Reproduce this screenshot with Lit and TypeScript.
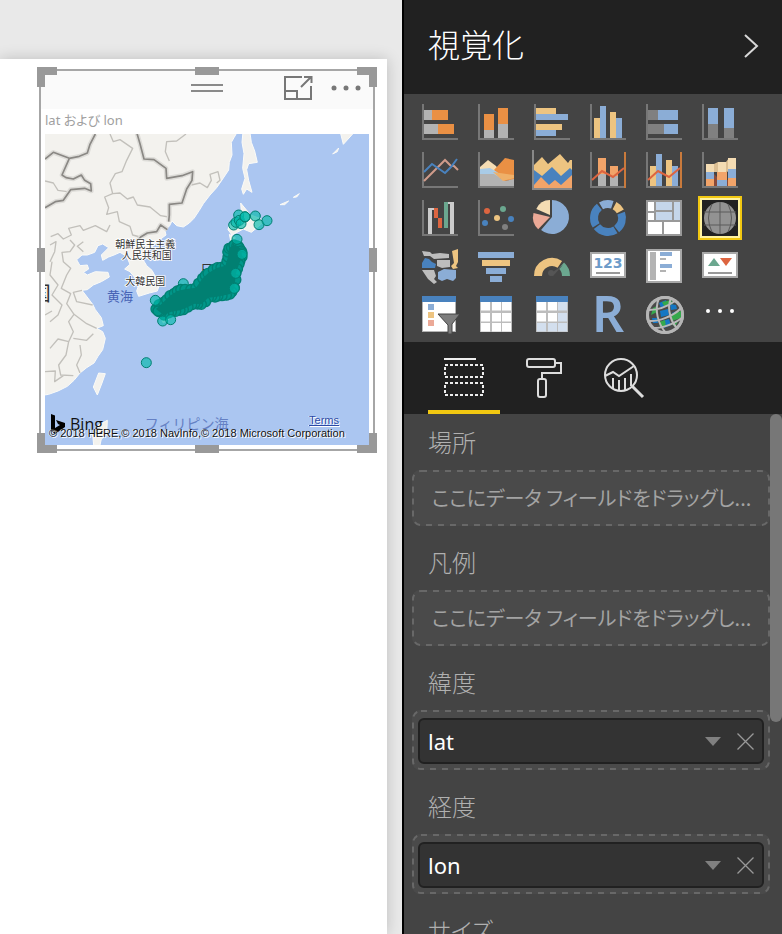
import { LitElement, html, svg, css } from "lit";
import { customElement } from "lit/decorators.js";
import { classMap } from "lit/directives/class-map.js";

const G = "#b3b3b3", D = "#808080", O = "#ea9044", B = "#8badd6", Y = "#edc481";
const DB = "#4982be", P = "#eba997", C = "#f4dcb3", R = "#dd6540", T = "#6ba78f";

const r = (x: number, y: number, w: number, h: number, fill: string) =>
  svg`<rect x=${x} y=${y} width=${w} height=${h} fill=${fill} />`;
const p = (d: string, fill: string) => svg`<path d=${d} fill=${fill} />`;
const line = (d: string, stroke: string, w = 2) =>
  svg`<path d=${d} fill="none" stroke=${stroke} stroke-width=${w} />`;
const dot = (x: number, y: number, rad: number, fill: string) =>
  svg`<circle cx=${x} cy=${y} r=${rad} fill=${fill} />`;
const axis = line("M3 2V37H38", "#777");

/* annular sector, angles in degrees clockwise from the top */
const ring = (cx: number, cy: number, ro: number, ri: number, a: number, b: number, fill: string) => {
  const pt = (rad: number, t: number) => {
    const q = (t * Math.PI) / 180;
    return `${(cx + rad * Math.sin(q)).toFixed(2)} ${(cy - rad * Math.cos(q)).toFixed(2)}`;
  };
  const big = b - a > 180 ? 1 : 0;
  return p(`M${pt(ro, a)}A${ro} ${ro} 0 ${big} 1 ${pt(ro, b)}L${pt(ri, b)}A${ri} ${ri} 0 ${big} 0 ${pt(ri, a)}Z`, fill);
};

const tableGrid = (shaded: boolean) => svg`
  ${r(4, 2, 32, 36, "#bdbdbd")}${r(4, 2, 32, 6, DB)}
  ${[0, 1, 2].map(i => [0, 1, 2].map(j =>
    r(5 + i * 10 + (i ? 1 : 0), 8 + j * 10 + (j ? 1 : 0), 9, 8.5, shaded && (i === 2 || j === 2) ? "#d3dfee" : "#fff")))}`;

const visuals: { name: string; art: unknown; on?: boolean }[] = [
  { name: "積み上げ横棒グラフ", art: svg`${axis}${r(4, 8, 8, 10, G)}${r(12, 8, 16, 10, O)}${r(4, 22, 14, 10, G)}${r(18, 22, 16, 10, O)}` },
  { name: "積み上げ縦棒グラフ", art: svg`${axis}${r(8, 12, 10, 16, O)}${r(8, 28, 10, 8, G)}${r(22, 6, 10, 16, O)}${r(22, 22, 10, 14, G)}` },
  { name: "集合横棒グラフ", art: svg`${axis}${r(4, 6, 20, 6, Y)}${r(4, 12, 32, 6, B)}${r(4, 22, 26, 6, Y)}${r(4, 28, 20, 6, B)}` },
  { name: "集合縦棒グラフ", art: svg`${axis}${r(6, 16, 6, 20, Y)}${r(12, 4, 6, 32, B)}${r(22, 10, 6, 26, Y)}${r(28, 16, 6, 20, B)}` },
  { name: "100% 積み上げ横棒グラフ", art: svg`${axis}${r(4, 8, 10, 10, D)}${r(14, 8, 20, 10, B)}${r(4, 22, 16, 10, D)}${r(20, 22, 14, 10, B)}` },
  { name: "100% 積み上げ縦棒グラフ", art: svg`${axis}${r(8, 6, 10, 16, B)}${r(8, 22, 10, 14, D)}${r(24, 6, 10, 20, B)}${r(24, 26, 10, 10, D)}` },
  { name: "折れ線グラフ", art: svg`${axis}${line("M4 31 25 10 31 16H34L38 20", "#cf9b8a")}${line("M4 22 12 14 25 23 31 17 37 9", DB)}` },
  { name: "面グラフ", art: svg`${axis}${p("M4 17 12 10 20 16 26 24 4 30Z", C)}${p("M18 20 29 8 38 10V30L28 31Z", O)}${p("M4 19 14 18 21 22 28 28H4Z", "#a9cbe6")}${p("M4 24 18 24 29 31 38 29V36H4Z", G)}${p("M17 22 38 25V28L27 31Z", "#efb069")}` },
  { name: "積み上げ面グラフ", art: svg`${p("M2 15 10 7 16 14 28 4 36 13 38 10H40V30H2Z", Y)}${p("M2 20 10 26 20 17 29 26 38 18 40 20V38H2Z", DB)}${p("M2 35 9 27 17 35 23 30 29 35 40 25V38H2Z", "#f2a469")}${p("M0 0H2V38H40V40H0Z", "#888")}` },
  { name: "折れ線および積み上げ縦棒グラフ", art: svg`${axis}${r(10, 8, 8, 16, "#f2a469")}${r(10, 24, 8, 12, G)}${r(22, 16, 8, 10, "#f2a469")}${r(22, 26, 8, 10, G)}${r(36, 2, 2, 36, "#c97a3c")}${line("M4 30 14 21 25 27 36 18", R)}` },
  { name: "折れ線および集合縦棒グラフ", art: svg`${axis}${r(6, 16, 6, 20, Y)}${r(12, 4, 6, 32, B)}${r(22, 10, 6, 26, Y)}${r(28, 16, 6, 20, B)}${r(36, 2, 2, 36, "#c97a3c")}${line("M4 30 14 21 25 27 36 18", R)}` },
  { name: "リボン グラフ", art: svg`${axis}${p("M6 14H14L18 12H26L29 8H36V20L26 22H6Z", "#dcbf93")}${p("M12 22 20 30H28L34 20V36H14Z", "#8a4a3a")}${r(6, 14, 8, 9, C)}${r(6, 22, 8, 7, B)}${r(6, 29, 8, 7, "#f2a469")}${r(18, 12, 8, 10, C)}${r(17, 22, 10, 8, "#f2a469")}${r(17, 30, 10, 6, B)}${r(28, 8, 8, 11, C)}${r(28, 19, 8, 9, B)}${r(28, 28, 8, 8, "#f2a469")}` },
  { name: "ウォーターフォール図", art: svg`${axis}${r(8, 10, 4, 26, "#ccc")}${r(12, 10, 2, 2, "#ccc")}${r(14, 10, 4, 10, R)}${r(18, 20, 4, 10, R)}${r(24, 4, 4, 26, T)}${r(28, 4, 6, 2, "#ccc")}${r(30, 4, 4, 32, "#ccc")}` },
  { name: "散布図", art: svg`${axis}${dot(11, 13, 3, R)}${dot(27, 11, 3, T)}${dot(21, 20, 3, Y)}${dot(9, 25, 3, DB)}${dot(35, 21, 3, DB)}${dot(29, 29, 3, D)}` },
  { name: "円グラフ", art: svg`${ring(20, 19, 17, 0, 0, 220, B)}${ring(18, 19, 17, 0, 224, 284, P)}${ring(18, 17, 15, 0, 294, 360, C)}` },
  { name: "ドーナツ グラフ", art: svg`${ring(20, 20, 18, 10, -30, 18, B)}${ring(20, 20, 18, 10, 28, 62, Y)}${ring(20, 20, 18, 10, 70, 142, DB)}${ring(20, 20, 18, 10, 148, 232, DB)}${ring(20, 20, 18, 10, 238, 322, DB)}` },
  { name: "ツリーマップ", art: svg`${r(2, 2, 36, 36, "#999")}${r(4, 4, 6, 9, "#fff")}${r(4, 15, 6, 7, "#fff")}${r(12, 4, 16, 8, "#c5d6ea")}${r(12, 14, 16, 8, "#c5d6ea")}${r(30, 4, 6, 18, "#c5d6ea")}${r(4, 24, 14, 12, "#fff")}${r(20, 24, 16, 12, "#fff")}` },
  { name: "マップ", on: true, art: svg`${dot(18, 18, 16, "#929292")}${line("M2 12H34M2 25H34M18 2V34M10 4Q3 18 10 32M26 4Q33 18 26 32", "#5a5a5a", 1)}` },
  { name: "塗り分け地図", art: svg`${p("M2 5 10 6 12 8 20 7 29 8V12L14 13 10 10 4 10Z", "#bdbdbd")}${p("M5 12 9 13 12 16 16 18 15 22H2V17Z", DB)}${p("M17 14H30V21L22 22 17 20Z", "#bdbdbd")}${p("M32 5 38 3 38 16 36 20 38 22 33 23 31 20 34 17Z", Y)}${p("M2 24H14L16 30 14 33 17 36 14 38 8 33Z", "#bdbdbd")}${p("M18 26 24 23 36 24V32L33 35 27 33 22 35 18 33Z", B)}` },
  { name: "じょうご", art: svg`${r(2, 6, 36, 6, B)}${r(6, 14, 28, 6, Y)}${r(10, 22, 20, 6, B)}${r(14, 30, 12, 6, B)}` },
  { name: "ゲージ", art: svg`${ring(20, 30, 18, 10, -90, 34, Y)}${ring(20, 30, 18, 10, 42, 90, T)}${p("M31 19 21 30 18 28Z", "#555")}${dot(19, 27, 3, "#555")}` },
  { name: "カード", art: svg`${r(2, 6, 36, 26, "#a8a8a8")}${r(4, 8, 32, 22, "#fff")}<text x="20" y="22" class="digits">123</text>${r(8, 26, 24, 2, "#999")}` },
  { name: "スライサー (複数行)", art: svg`${r(2, 3, 36, 34, "#a8a8a8")}${r(4, 5, 32, 30, "#fff")}${r(6, 6, 6, 28, G)}${r(16, 6, 12, 4, B)}${r(16, 12, 6, 2, G)}${r(16, 18, 12, 4, B)}${r(16, 24, 6, 2, G)}` },
  { name: "KPI", art: svg`${r(2, 6, 36, 26, "#a8a8a8")}${r(4, 8, 32, 22, "#fff")}${p("M8 20 14 12 20 20Z", T)}${p("M20 12H32L26 20Z", R)}${r(8, 26, 24, 2, "#999")}` },
  { name: "スライサー", art: svg`${r(2, 2, 34, 36, G)}${r(3, 3, 32, 34, "#fff")}${r(2, 2, 34, 6, DB)}${r(8, 10, 6, 6, B)}${r(8, 18, 6, 6, Y)}${r(8, 26, 6, 6, P)}<path d="M18 20H40L32 30V40H28V31Z" fill="#7d7d7d" stroke="#444" stroke-width="1"/>` },
  { name: "テーブル", art: tableGrid(false) },
  { name: "マトリックス", art: tableGrid(true) },
  { name: "R スクリプト ビジュアル", art: svg`<text x="20" y="38" class="letter">R</text>` },
  { name: "ArcGIS マップ", art: svg`${dot(21, 21, 19, "#b5b5b5")}${dot(21, 21, 16, "#4a4a4a")}${p("M15 9 22 6 24 11 17 14ZM26 10 32 11 33 15 27 16ZM16 17 24 15 25 21 17 23ZM28 19 33 17 34 22 29 24ZM18 27 25 25 27 31 20 34ZM8 24 13 24 14 29 9 29Z", "#1477c4")}${p("M9 14 13 12 13 18 7 21ZM18 8 27 6 29 10 20 12ZM27 21 37 17 37 24 28 27ZM15 28 21 26 22 33 16 33ZM28 30 34 27 31 33Z", "#35a84c")}${line("M4 27C14 28 30 22 37 14M8 34C18 35 32 29 39 23M5 16C14 16 24 12 31 7M15 4C10 16 14 30 22 39M27 4C22 16 28 30 34 35", "#b9b9b9", 2)}<circle cx="21" cy="21" r="18" fill="none" stroke="#b5b5b5" stroke-width="2"/>` },
  { name: "その他", art: svg`${dot(8, 17, 2, "#fff")}${dot(20, 17, 2, "#fff")}${dot(32, 17, 2, "#fff")}` },
];

const coast: [number, number][] = [
  [378, 762], [400, 742], [420, 722], [442, 708], [465, 703], [498, 698], [518, 670], [534, 655], [562, 638],
  [586, 632], [594, 606], [597, 580], [612, 570], [625, 574], [634, 588], [636, 605], [627, 628], [618, 655],
  [613, 698], [600, 717], [576, 722], [555, 726], [535, 728], [514, 748], [494, 746], [474, 756], [450, 766],
  [424, 770], [402, 780], [388, 770],
];
const edgeDots = coast.flatMap(([x, y], i) => {
  const [nx, ny] = coast[(i + 1) % coast.length];
  return [[x, y], [(x + nx) / 2 + ((i * 7) % 5) - 2, (y + ny) / 2 + ((i * 5) % 7) - 3]];
});
const loneDots = [
  [376, 736], [398, 798], [422, 794], [349, 923], [621, 553], [626, 480], [611, 510], [618, 502],
  [628, 496], [633, 506], [645, 486], [645, 485], [676, 483], [687, 509], [711, 497],
  [617, 655], [613, 700], [636, 598],
];

@customElement("map-picture")
class MapPicture extends LitElement {
  static styles = css`
    :host { display: block; }
    svg { display: block; width: 100%; height: auto; }
    .land { fill: #f3f2ee; stroke: #fbfbf8; stroke-width: 3; }
    .thin { fill: none; stroke: #c2c0bb; stroke-width: 4; stroke-linejoin: round; }
    .halo { fill: none; stroke: #dddcd8; stroke-width: 14; stroke-linejoin: round; }
    .thick { fill: none; stroke: #8a8884; stroke-width: 5; stroke-linejoin: round; }
    .mass { fill: #018072; }
    .pt { fill: #01b8aa; fill-opacity: 0.65; stroke: #018072; stroke-width: 3; }
    .rim { fill: #01978a; stroke: #018072; stroke-width: 4; }
    text { font-family: "Noto Sans CJK JP", sans-serif; }
    .country { font-size: 30px; fill: #333; text-anchor: middle; paint-order: stroke; stroke: #fff; stroke-width: 5; }
    .big { font-size: 39px; fill: #333; text-anchor: middle; }
    .huge { font-size: 60px; fill: #333; text-anchor: middle; }
    .sea { font-size: 39px; fill: #4763b5; text-anchor: middle; }
    .faint { font-size: 42px; fill: #6480c4; text-anchor: middle; }
  `;
  render() {
    const frontier = "M196 237 180 268 172 294 148 304 118 310 70 292 45 312M118 310 96 360 108 368 130 372 154 360 164 376 182 386 184 408 164 400 122 404 100 436 76 440 45 458M318 225 330 266 342 312 372 314 408 340 410 370 456 362 488 350 486 376 470 402 456 444 418 448 418 480 416 500M412 524 392 510 380 530 352 534 332 546 318 562";
    const honshu = "M" + coast.map(c => c.join(" ")).join("L") + "Z";
    return html`<svg viewBox="45 237 972 933" role="img" aria-label="lat および lon">
      <rect x="45" y="237" width="972" height="933" fill="#abc6f1" />
      <path class="land" d="M30 220H628L612 248 604 262 606 300 598 322 596 345 578 372 560 398 540 420 520 446 508 466 492 490 478 504 460 516 440 512 426 498 418 514 404 524 408 540 392 552 372 570 352 594 338 612 350 632 366 646 380 672 388 690 382 708 358 714 326 724 320 708 326 690 318 672 300 650 284 642 300 628 290 604 270 592 252 600 236 606 218 616 214 600 236 578 218 567 204 572 194 592 172 600 156 600 140 614 150 632 172 630 176 642 160 652 172 660 196 650 234 652 238 666 214 680 190 690 172 704 156 706 176 732 188 748 196 764 214 788 220 812 200 820 218 830 226 850 218 884 204 904 192 924 170 938 150 954 132 976 112 994 84 1008 56 1018 30 1022Z" />
      <path class="land" d="M640 220H658L664 262 674 288 682 322 656 326 650 344 656 376 666 412 650 402 640 418 635 402 645 370 638 340 642 296 636 262ZM632 444 650 466 662 480 690 490 700 502 664 532 640 522 606 540 594 524 598 508 622 498 634 470ZM598 538 616 548 604 566ZM930 228H976L940 268ZM908 297 926 279 922 290ZM750 449 776 438 764 449ZM790 427 808 416 800 426ZM206 954 226 956 216 984 202 1020 190 996ZM188 1140 206 1110 232 1096 230 1140 214 1152 208 1180H192ZM378 752 400 742 420 790 400 804Z" />
      <path class="thin" d="M240 237 250 260 270 254 308 280 290 316 276 350 256 356 240 384 248 416 224 426 236 458 230 478 262 470 268 500 300 514 308 540 330 546M248 416 270 414 292 432 310 426 322 450 360 456 392 482 416 486M468 237 440 258 410 260 406 290 418 318M484 390 510 384 532 398 544 376 540 358 564 350 570 376 560 384M45 378 70 384 84 406 112 410M62 545 84 536 100 552 124 540 116 520 150 512 160 526 196 512 230 530 240 510M60 570 78 560 74 590 60 620M120 555 134 570 120 590 96 592 100 620 122 640 110 660M160 560 142 574 160 590M66 620 60 660 84 690 66 720 96 750 84 780 60 800M110 660 94 700 122 716 110 746 132 778 116 800 130 830 116 860 84 852 60 880M156 706 130 712 140 740 188 750M132 778 170 806 200 820M130 850 170 856 190 836M116 860 108 900 86 930 92 960 130 962M150 870 154 900 140 930 150 954M45 950 76 948 74 980 100 962M45 780 66 768" />
      <path class="halo" d=${frontier} />
      <path class="thick" d=${frontier} />
      <text class="country" x="346" y="580">朝鮮民主主義</text>
      <text class="country" x="350" y="613">人民共和国</text>
      <text class="country" x="346" y="690">大韓民国</text>
      <text class="sea" x="270" y="737">黄海</text>
      <text class="big" x="550" y="656">日本</text>
      <text class="huge" x="32" y="738">国</text>
      <text class="faint" x="470" y="1122">フィリピン海</text>
      <circle class="pt" cx="460" cy="686" r="15" />
      ${edgeDots.map(([x, y]) => svg`<circle class="rim" cx=${x} cy=${y} r="15" />`)}
      <path class="mass" d=${honshu} />
      ${loneDots.map(([x, y]) => svg`<circle class="pt" cx=${x} cy=${y} r="15" />`)}
    </svg>`;
  }
}

@customElement("map-visual")
class MapVisual extends LitElement {
  static styles = css`
    :host { display: block; position: relative; border: 2px solid #a6a6a6; font-family: "Noto Sans", "Noto Sans CJK JP", sans-serif; }
    button { border: 0; padding: 0; background: none; display: block; }
    svg { display: block; }
    .bar { display: grid; grid-template-columns: 1fr auto 1fr; align-items: center; height: 34px; padding: 0 12px 4px; background: #fafafa; }
    .grip { grid-column: 2; }
    .tools { display: flex; justify-content: flex-end; align-items: center; gap: 18px; }
    .body { padding: 0 4px 4px; }
    .title { margin: 0; font-size: 13px; line-height: 22px; padding-bottom: 3px; font-weight: 400; color: #a0a0a0; font-feature-settings: "palt"; }
    .map { position: relative; }
    .logo { position: absolute; left: 6px; bottom: 9px; display: flex; align-items: center; gap: 5px; font-family: "Open Sans", sans-serif; font-size: 16px; line-height: 24px; color: #111; }
    .foot { position: absolute; left: 4px; right: 30px; bottom: 5px; display: grid; grid-template-columns: minmax(0, 1fr); font: 11px/13px "Liberation Sans", sans-serif; color: #111; white-space: nowrap; text-shadow: 1px 1px #fff, -1px 0 #ffffff99; }
    .foot a { justify-self: end; color: #2b49a6; }
    .handles { position: absolute; inset: -4px; display: grid; grid-template-columns: 20px 1fr 24px 1fr 20px; grid-template-rows: 20px 1fr 24px 1fr 20px; pointer-events: none; }
    .h { border: 0 solid #999; }
    .t { border-top-width: 8px; } .b { border-bottom-width: 8px; } .l { border-left-width: 8px; } .r { border-right-width: 8px; }
    .c1 { grid-column: 1; } .c3 { grid-column: 3; } .c5 { grid-column: 5; }
    .r1 { grid-row: 1; } .r3 { grid-row: 3; } .r5 { grid-row: 5; }
  `;
  render() {
    const handles = ["t l c1 r1", "t c3 r1", "t r c5 r1", "l c1 r3", "r c5 r3", "b l c1 r5", "b c3 r5", "b r c5 r5"];
    return html`
      <div class="bar">
        <svg class="grip" width="32" height="8" viewBox="0 0 32 8"><path d="M0 1H32M0 7H32" stroke="#8a8a8a" stroke-width="2" /></svg>
        <div class="tools">
          <button aria-label="フォーカス モード"><svg width="29" height="24" viewBox="0 0 29 24" fill="none" stroke="#777" stroke-width="2"><path d="M18 1H1V23H27V10M1 15H13V23M17 11 27 1M20 1H27.5V7" /></svg></button>
          <button aria-label="その他のオプション"><svg width="30" height="6" viewBox="0 0 30 6" fill="#777"><circle cx="3" cy="3" r="2.5" /><circle cx="15" cy="3" r="2.5" /><circle cx="27" cy="3" r="2.5" /></svg></button>
        </div>
      </div>
      <div class="body">
        <h2 class="title">lat および lon</h2>
        <div class="map">
          <map-picture></map-picture>
          <div class="logo"><svg width="14" height="20" viewBox="0 0 14 20"><path d="M0 0 4 1.500V14L9 11 7 10 5 6 14 9V13L4 20 0 17Z" fill="#000" /></svg>Bing</div>
          <div class="foot"><a href="#terms">Terms</a><span>© 2018 HERE,© 2018 NavInfo,© 2018 Microsoft Corporation</span></div>
        </div>
      </div>
      <div class="handles">${handles.map(c => html`<i class="h ${c}"></i>`)}</div>`;
  }
}

@customElement("field-well")
class FieldWell extends LitElement {
  static properties = { label: {}, field: {} };
  declare label: string;
  declare field: string;
  static styles = css`
    :host { display: block; }
    h3 { margin: 0 0 12px 16px; font-size: 24px; line-height: 30px; font-weight: 300; color: #b0b0b0; font-feature-settings: "palt"; }
    .well { position: relative; border-radius: 8px; background: #4a4a4a; }
    .dash { position: absolute; inset: 0; width: 100%; height: 100%; pointer-events: none; }
    .dash rect { x: 1px; y: 1px; width: calc(100% - 2px); height: calc(100% - 2px); fill: none; stroke: #686868; stroke-width: 2; stroke-dasharray: 6 6; }
    .hint { padding: 0 20px; font-size: 20px; line-height: 56px; color: #a3a3a3; font-family: "Noto Sans CJK JP", sans-serif; white-space: nowrap; font-feature-settings: "palt"; }
    .full { padding: 8px 6px 6px; }
    .pill { display: flex; align-items: center; height: 42px; padding: 0 8px; border: 2px solid #212121; border-radius: 6px; background: #333; color: #fff; font-size: 22px; line-height: 42px; }
    .name { flex: 1; }
    button { border: 0; padding: 0; margin-left: 16px; background: none; display: block; }
    svg { display: block; }
  `;
  render() {
    const dash = html`<svg class="dash"><rect rx="8" /></svg>`;
    return html`<h3>${this.label}</h3>
      ${this.field
        ? html`<div class="well full">${dash}<div class="pill"><span class="name">${this.field}</span>
            <button aria-label="メニュー"><svg width="16" height="9" viewBox="0 0 16 9"><path d="M0 0H16L8 9Z" fill="#808080" /></svg></button>
            <button aria-label="削除"><svg width="17" height="17" viewBox="0 0 17 17"><path d="M0.500 0.500 16.500 16.500M16.500 0.500 0.500 16.500" stroke="#999" stroke-width="1.300" /></svg></button></div></div>`
        : html`<div class="well">${dash}<div class="hint">ここにデータ フィールドをドラッグし...</div></div>`}`;
  }
}

@customElement("app-root")
class AppRoot extends LitElement {
  static styles = css`
    :host { display: grid; grid-template-columns: minmax(0, 1fr) 378px; height: 100vh; overflow: hidden; background: #e9e9e9; font-family: "Noto Sans", "Noto Sans CJK JP", sans-serif; }
    button { border: 0; padding: 0; background: none; display: block; }
    svg { display: block; overflow: visible; }
    .canvas { display: grid; padding: 59px 15px 0 0; border-right: 2px solid #000; overflow: hidden; }
    .page { padding: 10px 12px 0 39px; background: #fff; box-shadow: 0 0 14px #00000030; }
    .pane { display: flex; flex-direction: column; min-height: 0; background: #444; }
    .head { display: flex; align-items: center; justify-content: space-between; height: 94px; box-sizing: border-box; padding: 0 24px 8px; background: #212121; color: #fff; }
    .head button { padding-top: 6px; }
    h1 { margin: 0; font-size: 32px; line-height: 40px; font-weight: 300; font-family: "Noto Sans CJK JP", sans-serif; }
    .gallery { display: grid; grid-template-columns: repeat(6, 56px); grid-auto-rows: 48px; padding: 4px 8px; place-items: center; }
    .on { border: 2px solid #f2c811; box-shadow: inset 0 0 0 2px #fff3a0; background: #222; padding: 2px; }
    .on svg { width: 36px; height: 36px; }
    .digits { font: 700 14px "DejaVu Sans", sans-serif; fill: #6c9bc9; text-anchor: middle; }
    .letter { font: 600 50px "Noto Sans", sans-serif; fill: #8badd6; text-anchor: middle; }
    .tabs { display: flex; gap: 8px; height: 72px; padding-left: 24px; background: #212121; }
    .tab { width: 72px; padding: 16px 16px 12px; border-bottom: 4px solid transparent; }
    .cur { border-color: #f2c811; }
    .area { display: grid; grid-template-columns: minmax(0, 1fr) 12px; flex: 1; min-height: 0; overflow: hidden; }
    .wells { display: flex; flex-direction: column; gap: 22px; padding: 14px 0 0 8px; }
    .thumb { height: 308px; border-radius: 6px; background: #777; }
  `;
  render() {
    return html`
      <main class="canvas"><div class="page"><map-visual></map-visual></div></main>
      <aside class="pane">
        <header class="head"><h1>視覚化</h1>
          <button aria-label="折りたたむ"><svg width="15" height="24" viewBox="0 0 15 24"><path d="M2 1 14 12 2 23" fill="none" stroke="#d8d8d8" stroke-width="2" /></svg></button>
        </header>
        <div class="gallery">${visuals.map(v => html`<button class=${classMap({ on: !!v.on })} aria-label=${v.name}>
          <svg width="40" height="40" viewBox=${v.on ? "0 0 36 36" : "0 0 40 40"}>${v.art}</svg></button>`)}</div>
        <nav class="tabs">
          <button class="tab cur" aria-label="フィールド"><svg width="40" height="40" viewBox="0 0 40 40" fill="none" stroke="#eee" stroke-width="2"><path d="M0 1H32" /><path stroke-dasharray="3 2" d="M1 7H39V19H1ZM1 25H39V37H1Z" /></svg></button>
          <button class="tab" aria-label="書式"><svg width="40" height="40" viewBox="0 0 40 40" fill="none" stroke="#ddd" stroke-width="2"><rect x="3" y="1" width="28" height="8" rx="2" /><path d="M31 5H37V15H18V21" /><rect x="14" y="21" width="8" height="18" rx="2" /></svg></button>
          <button class="tab" aria-label="分析"><svg width="40" height="40" viewBox="0 0 40 40" fill="none" stroke="#ddd" stroke-width="2"><circle cx="17" cy="17" r="16" /><path d="M1 18 9 14 15 18 30 8M9 20V31M15 22V33M21 20V33M27 16V28" /><path d="M28 28 39 39" stroke-width="3" /></svg></button>
        </nav>
        <div class="area">
          <div class="wells">
            <field-well label="場所"></field-well>
            <field-well label="凡例"></field-well>
            <field-well label="緯度" field="lat"></field-well>
            <field-well label="経度" field="lon"></field-well>
            <field-well label="サイズ"></field-well>
          </div>
          <div class="thumb"></div>
        </div>
      </aside>`;
  }
}
